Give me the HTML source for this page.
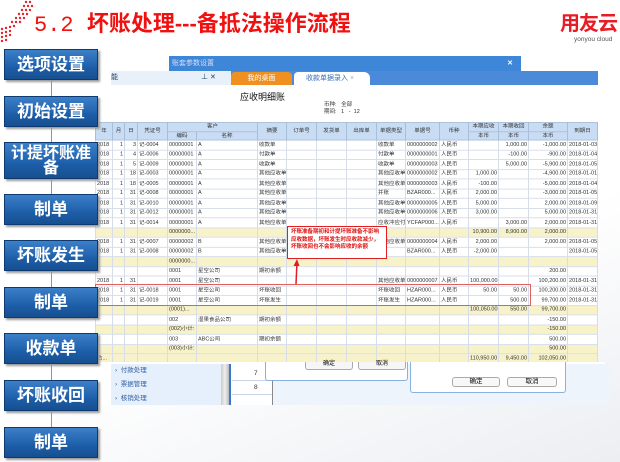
<!DOCTYPE html>
<html><head><meta charset="utf-8"><style>
*{margin:0;padding:0;box-sizing:border-box}
body{width:620px;height:462px;overflow:hidden;position:relative;background:linear-gradient(160deg,#fff 0%,#fff 60%,#eceef2 100%);font-family:"Liberation Sans","Noto Sans CJK SC",sans-serif}
.a{position:absolute}
.title{left:34px;top:6px;font-size:22px;font-weight:bold;color:#f01010;white-space:nowrap;letter-spacing:0px}
.title span{font-family:"Liberation Mono","Noto Sans CJK SC",monospace;font-weight:normal}
.btn{position:absolute;left:4px;width:94px;height:31px;background:linear-gradient(#3c80c8,#1d5ea8 60%,#174f90);border:1px solid #0d3a70;box-shadow:2px 2px 2px #999;color:#fff;font-weight:bold;font-size:17px;text-align:center;line-height:29px;font-family:"Liberation Sans","Noto Sans CJK SC",sans-serif}
.arr{position:absolute;left:51px;width:1px;background:#6a9ad8}
table{border-collapse:collapse;table-layout:fixed;font-size:5.5px;font-family:"Liberation Sans","Noto Sans CJK SC",sans-serif;color:#333;transform:scaleY(0.925);transform-origin:0 0}
tr{height:10.5px}
td{border:1px solid #d6dde8;height:10.5px;white-space:nowrap;overflow:hidden;padding:0 1px;line-height:4px;vertical-align:middle}
.h td{background:#c8dcf4;text-align:center;border-color:#a8bdd8;height:9.5px}
.h{height:9.5px}
.y td{background:#f8f2c8}
.r{text-align:right}
</style></head><body>
<svg class="a" style="left:0;top:0" width="40" height="45">
<g fill="#e8202a">
<circle cx="26" cy="2" r="1.2"/><circle cx="30" cy="2" r="1.2"/><circle cx="24" cy="6" r="1.2"/><circle cx="28" cy="6" r="1.2"/><circle cx="32" cy="6" r="1.2"/>
<circle cx="22" cy="10" r="1.2"/><circle cx="26" cy="10" r="1.2"/><circle cx="30" cy="10" r="1.2"/><circle cx="19" cy="14" r="1.2"/><circle cx="23" cy="14" r="1.2"/><circle cx="27" cy="14" r="1.2"/>
<circle cx="16" cy="18" r="1.2"/><circle cx="20" cy="18" r="1.2"/><circle cx="24" cy="18" r="1.2"/><circle cx="12" cy="22" r="1.2"/><circle cx="16" cy="22" r="1.2"/><circle cx="20" cy="22" r="1.2"/>
<circle cx="2" cy="29" r="1.2"/><circle cx="6" cy="28" r="1.2"/><circle cx="10" cy="27" r="1.2"/><circle cx="14" cy="26" r="1.2"/>
<circle cx="2" cy="33" r="1.2"/><circle cx="6" cy="32" r="1.2"/><circle cx="10" cy="31" r="1.2"/><circle cx="2" cy="37" r="1.2"/><circle cx="6" cy="36" r="1.2"/><circle cx="10" cy="35" r="1.2"/><circle cx="2" cy="41" r="1.2"/><circle cx="6" cy="40" r="1.2"/>
</g></svg>
<div class="a title"><span>5.2 </span>坏账处理---备抵法操作流程</div>
<div class="a" style="left:560px;top:7px;font-size:20px;font-weight:bold;color:#e81c24;letter-spacing:-1px">用友云</div>
<div class="a" style="left:574px;top:36px;font-size:6.5px;color:#555">yonyou cloud</div>

<div class="a" style="left:169px;top:56px;width:352px;height:15px;background:#3d86d8;color:#dde;font-size:7px;line-height:15px;padding-left:3px">账套参数设置<span style="position:absolute;right:8px;color:#fff;font-weight:bold">✕</span></div>
<div class="a" style="left:111px;top:71px;width:487px;height:14px;background:#4a8ad8"></div>
<div class="a" style="left:111px;top:71px;width:120px;height:14px;background:#e8f0fa;font-size:7px;color:#246;line-height:14px">能<span style="position:absolute;left:90px">⊥ ✕</span></div>
<div class="a" style="left:231px;top:72px;width:61px;height:13px;background:#f09020;border-radius:4px 4px 0 0;color:#fff;font-size:7px;text-align:center;line-height:13px">我的桌面</div>
<div class="a" style="left:294px;top:72px;width:76px;height:13px;background:#fff;border-radius:4px 6px 0 0;color:#3a70b8;font-size:7px;line-height:13px;padding-left:12px">收款单据录入 <span style="color:#aaa">×</span></div>
<div class="a" style="left:95px;top:85px;width:503px;height:277px;background:#fff"></div>
<div class="a" style="left:240px;top:90px;font-size:9px;color:#111">应收明细账</div>
<div class="a" style="left:324px;top:102px;font-size:5.5px;color:#333;line-height:7px">币种:&nbsp;&nbsp;&nbsp;全部<br>期间:&nbsp;&nbsp;&nbsp;1&nbsp;&nbsp;&nbsp;-&nbsp;&nbsp;12</div>

<table class="a" style="left:95px;top:122px;width:502px">
<colgroup><col style="width:17px"><col style="width:12px"><col style="width:13px"><col style="width:30px"><col style="width:29px"><col style="width:61px"><col style="width:29px"><col style="width:30px"><col style="width:30px"><col style="width:30px"><col style="width:29px"><col style="width:34px"><col style="width:29px"><col style="width:30px"><col style="width:30px"><col style="width:39px"><col style="width:30px"></colgroup>
<tr class="h"><td rowspan="2">年</td><td rowspan="2">月</td><td rowspan="2">日</td><td rowspan="2">凭证号</td><td colspan="2">客户</td><td rowspan="2">摘要</td><td rowspan="2">订单号</td><td rowspan="2">发货单</td><td rowspan="2">出库单</td><td rowspan="2">单据类型</td><td rowspan="2">单据号</td><td rowspan="2">币种</td><td>本期应收</td><td>本期收回</td><td>余额</td><td rowspan="2">到期日</td></tr>
<tr class="h"><td>编码</td><td>名称</td><td>本币</td><td>本币</td><td>本币</td></tr>
<tr><td>2018</td><td class="r">1</td><td class="r">3</td><td>记-0004</td><td>00000001</td><td>A</td><td>收款单</td><td></td><td></td><td></td><td>收款单</td><td>0000000002</td><td>人民币</td><td></td><td class="r">1,000.00</td><td class="r">-1,000.00</td><td>2018-01-03</td></tr>
<tr><td>2018</td><td class="r">1</td><td class="r">4</td><td>记-0006</td><td>00000001</td><td>A</td><td>付款单</td><td></td><td></td><td></td><td>付款单</td><td>0000000001</td><td>人民币</td><td></td><td class="r">-100.00</td><td class="r">-900.00</td><td>2018-01-04</td></tr>
<tr><td>2018</td><td class="r">1</td><td class="r">5</td><td>记-0009</td><td>00000001</td><td>A</td><td>收款单</td><td></td><td></td><td></td><td>收款单</td><td>0000000003</td><td>人民币</td><td></td><td class="r">5,000.00</td><td class="r">-5,900.00</td><td>2018-01-05</td></tr>
<tr><td>2018</td><td class="r">1</td><td class="r">18</td><td>记-0003</td><td>00000001</td><td>A</td><td>其他应收单</td><td></td><td></td><td></td><td>其他应收单</td><td>0000000002</td><td>人民币</td><td class="r">1,000.00</td><td></td><td class="r">-4,900.00</td><td>2018-01-01</td></tr>
<tr><td>2018</td><td class="r">1</td><td class="r">18</td><td>记-0005</td><td>00000001</td><td>A</td><td>其他应收单</td><td></td><td></td><td></td><td>其他应收单</td><td>0000000003</td><td>人民币</td><td class="r">-100.00</td><td></td><td class="r">-5,000.00</td><td>2018-01-04</td></tr>
<tr><td>2018</td><td class="r">1</td><td class="r">31</td><td>记-0008</td><td>00000001</td><td>A</td><td>其他应收单</td><td></td><td></td><td></td><td>并账</td><td>BZAR000...</td><td>人民币</td><td class="r">2,000.00</td><td></td><td class="r">-3,000.00</td><td>2018-01-05</td></tr>
<tr><td>2018</td><td class="r">1</td><td class="r">31</td><td>记-0010</td><td>00000001</td><td>A</td><td>其他应收单</td><td></td><td></td><td></td><td>其他应收单</td><td>0000000005</td><td>人民币</td><td class="r">5,000.00</td><td></td><td class="r">2,000.00</td><td>2018-01-09</td></tr>
<tr><td>2018</td><td class="r">1</td><td class="r">31</td><td>记-0012</td><td>00000001</td><td>A</td><td>其他应收单</td><td></td><td></td><td></td><td>其他应收单</td><td>0000000006</td><td>人民币</td><td class="r">3,000.00</td><td></td><td class="r">5,000.00</td><td>2018-01-31</td></tr>
<tr><td>2018</td><td class="r">1</td><td class="r">31</td><td>记-0014</td><td>00000001</td><td>A</td><td>其他应收单</td><td></td><td></td><td></td><td>应收冲应付</td><td>YCFAP000...</td><td>人民币</td><td></td><td class="r">3,000.00</td><td class="r">2,000.00</td><td>2018-01-31</td></tr>
<tr class="y"><td></td><td></td><td></td><td></td><td>0000000...</td><td></td><td></td><td></td><td></td><td></td><td></td><td></td><td></td><td class="r">10,900.00</td><td class="r">8,900.00</td><td class="r">2,000.00</td><td></td></tr>
<tr><td>2018</td><td class="r">1</td><td class="r">31</td><td>记-0007</td><td>00000002</td><td>B</td><td>其他应收单</td><td></td><td></td><td></td><td>其他应收单</td><td>0000000004</td><td>人民币</td><td class="r">2,000.00</td><td></td><td class="r">2,000.00</td><td>2018-01-05</td></tr>
<tr><td>2018</td><td class="r">1</td><td class="r">31</td><td>记-0008</td><td>00000002</td><td>B</td><td>其他应收单</td><td></td><td></td><td></td><td></td><td>BZAR000...</td><td>人民币</td><td class="r">-2,000.00</td><td></td><td></td><td>2018-01-05</td></tr>
<tr class="y"><td></td><td></td><td></td><td></td><td>0000000...</td><td></td><td></td><td></td><td></td><td></td><td></td><td></td><td></td><td></td><td></td><td></td><td></td></tr>
<tr><td></td><td></td><td></td><td></td><td>0001</td><td>星空公司</td><td>期初余额</td><td></td><td></td><td></td><td></td><td></td><td></td><td></td><td></td><td class="r">200.00</td><td></td></tr>
<tr><td>2018</td><td class="r">1</td><td class="r">31</td><td></td><td>0001</td><td>星空公司</td><td></td><td></td><td></td><td></td><td>其他应收单</td><td>0000000007</td><td>人民币</td><td class="r">100,000.00</td><td></td><td class="r">100,200.00</td><td>2018-01-31</td></tr>
<tr><td>2018</td><td class="r">1</td><td class="r">31</td><td>记-0018</td><td>0001</td><td>星空公司</td><td>坏账收回</td><td></td><td></td><td></td><td>坏账收回</td><td>HZAR000...</td><td>人民币</td><td class="r">50.00</td><td class="r">50.00</td><td class="r">100,200.00</td><td>2018-01-31</td></tr>
<tr><td>2018</td><td class="r">1</td><td class="r">31</td><td>记-0019</td><td>0001</td><td>星空公司</td><td>坏账发生</td><td></td><td></td><td></td><td>坏账发生</td><td>HZAR000...</td><td>人民币</td><td></td><td class="r">500.00</td><td class="r">99,700.00</td><td>2018-01-31</td></tr>
<tr class="y"><td></td><td></td><td></td><td></td><td>(0001)...</td><td></td><td></td><td></td><td></td><td></td><td></td><td></td><td></td><td class="r">100,050.00</td><td class="r">550.00</td><td class="r">99,700.00</td><td></td></tr>
<tr><td></td><td></td><td></td><td></td><td>002</td><td>湿果食品公司</td><td>期初余额</td><td></td><td></td><td></td><td></td><td></td><td></td><td></td><td></td><td class="r">-150.00</td><td></td></tr>
<tr class="y"><td></td><td></td><td></td><td></td><td>(002)小计:</td><td></td><td></td><td></td><td></td><td></td><td></td><td></td><td></td><td></td><td></td><td class="r">-150.00</td><td></td></tr>
<tr><td></td><td></td><td></td><td></td><td>003</td><td>ABC公司</td><td>期初余额</td><td></td><td></td><td></td><td></td><td></td><td></td><td></td><td></td><td class="r">500.00</td><td></td></tr>
<tr class="y"><td></td><td></td><td></td><td></td><td>(003)小计:</td><td></td><td></td><td></td><td></td><td></td><td></td><td></td><td></td><td></td><td></td><td class="r">500.00</td><td></td></tr>
<tr class="y"><td>合...</td><td></td><td></td><td></td><td></td><td></td><td></td><td></td><td></td><td></td><td></td><td></td><td></td><td class="r">110,950.00</td><td class="r">9,450.00</td><td class="r">102,050.00</td><td></td></tr>
</table>

<div class="a" style="left:95px;top:284px;width:436px;height:22px;border:1px solid #e06060"></div>
<div class="a" style="left:287px;top:226px;width:100px;height:33px;background:#fff;border:1.5px solid #e02020;color:#e01010;font-size:5.5px;line-height:7.5px;padding:2px 3px;font-weight:bold">坏账准备期初和计提坏账准备不影响应收数据，坏账发生时应收款减少，坏账收回也不会影响应收的余额</div>
<svg class="a" style="left:290px;top:258px" width="14" height="28"><path d="M6 26 L7 4" stroke="#e02020" stroke-width="1.5"/><path d="M3.5 8 L7 1 L9.5 8Z" fill="#e02020"/></svg>

<div class="a" style="left:95px;top:362px;width:510px;height:43px;background:#fff"></div>
<div class="a" style="left:111px;top:364px;width:110px;height:41px;background:#e6f0fc;font-size:6.5px;color:#3060a0;line-height:14px;padding-left:4px">›&nbsp; 付款处理<br>›&nbsp; 票据管理<br>›&nbsp; 核销处理</div>
<div class="a" style="left:221px;top:364px;width:10px;height:41px;background:linear-gradient(90deg,#ccc,#eee,#bbb);border-right:2px solid #3a78c8"></div>
<div class="a" style="left:232px;top:364px;width:40px;height:41px;font-size:6.5px;color:#333"><div style="position:absolute;left:22px;top:6px">7</div><div style="position:absolute;left:22px;top:20px">8</div><div style="position:absolute;left:0;top:16px;width:40px;border-top:1px solid #c8d4e4"></div><div style="position:absolute;left:0;top:30px;width:40px;border-top:1px solid #c8d4e4"></div></div>
<div class="a" style="left:272px;top:364px;width:338px;height:41px;background:#eef4fc;border-left:1px solid #888"></div>
<div class="a" style="left:265px;top:362px;width:143px;height:19px;background:#fff;border:1px solid #8ab0e0;border-top:none;border-radius:0 0 3px 3px"></div>
<div class="a" style="left:305px;top:362px;width:48px;height:8px;border:1px solid #aaa;border-top:none;border-radius:0 0 3px 3px;font-size:6px;text-align:center;line-height:5px;background:#f6f6f6">确定</div>
<div class="a" style="left:358px;top:362px;width:48px;height:8px;border:1px solid #aaa;border-top:none;border-radius:0 0 3px 3px;font-size:6px;text-align:center;line-height:5px;background:#f6f6f6">取消</div>
<div class="a" style="left:410px;top:362px;width:156px;height:31px;background:#fff;border:1px solid #8ab0e0;border-top:none;border-radius:0 0 3px 3px"></div>
<div class="a" style="left:452px;top:377px;width:48px;height:10px;border:1px solid #aaa;border-radius:3px;font-size:6.5px;text-align:center;line-height:8px;background:#f8f8f8">确定</div>
<div class="a" style="left:507px;top:377px;width:50px;height:10px;border:1px solid #aaa;border-radius:3px;font-size:6.5px;text-align:center;line-height:8px;background:#f8f8f8">取消</div>

<div class="btn" style="top:49px">选项设置</div>
<div class="arr" style="top:81px;height:15px"></div>
<div class="btn" style="top:96px">初始设置</div>
<div class="arr" style="top:128px;height:14px"></div>
<div class="btn" style="top:142px;height:37px;line-height:15px;padding-top:3px;font-size:16px">计提坏账准<br>备</div>
<div class="arr" style="top:180px;height:14px"></div>
<div class="btn" style="top:194px">制单</div>
<div class="btn" style="top:240px">坏账发生</div>
<div class="arr" style="top:272px;height:15px"></div>
<div class="btn" style="top:287px">制单</div>
<div class="btn" style="top:333px">收款单</div>
<div class="arr" style="top:365px;height:15px"></div>
<div class="btn" style="top:380px">坏账收回</div>
<div class="arr" style="top:412px;height:15px"></div>
<div class="btn" style="top:427px">制单</div>
</body></html>
